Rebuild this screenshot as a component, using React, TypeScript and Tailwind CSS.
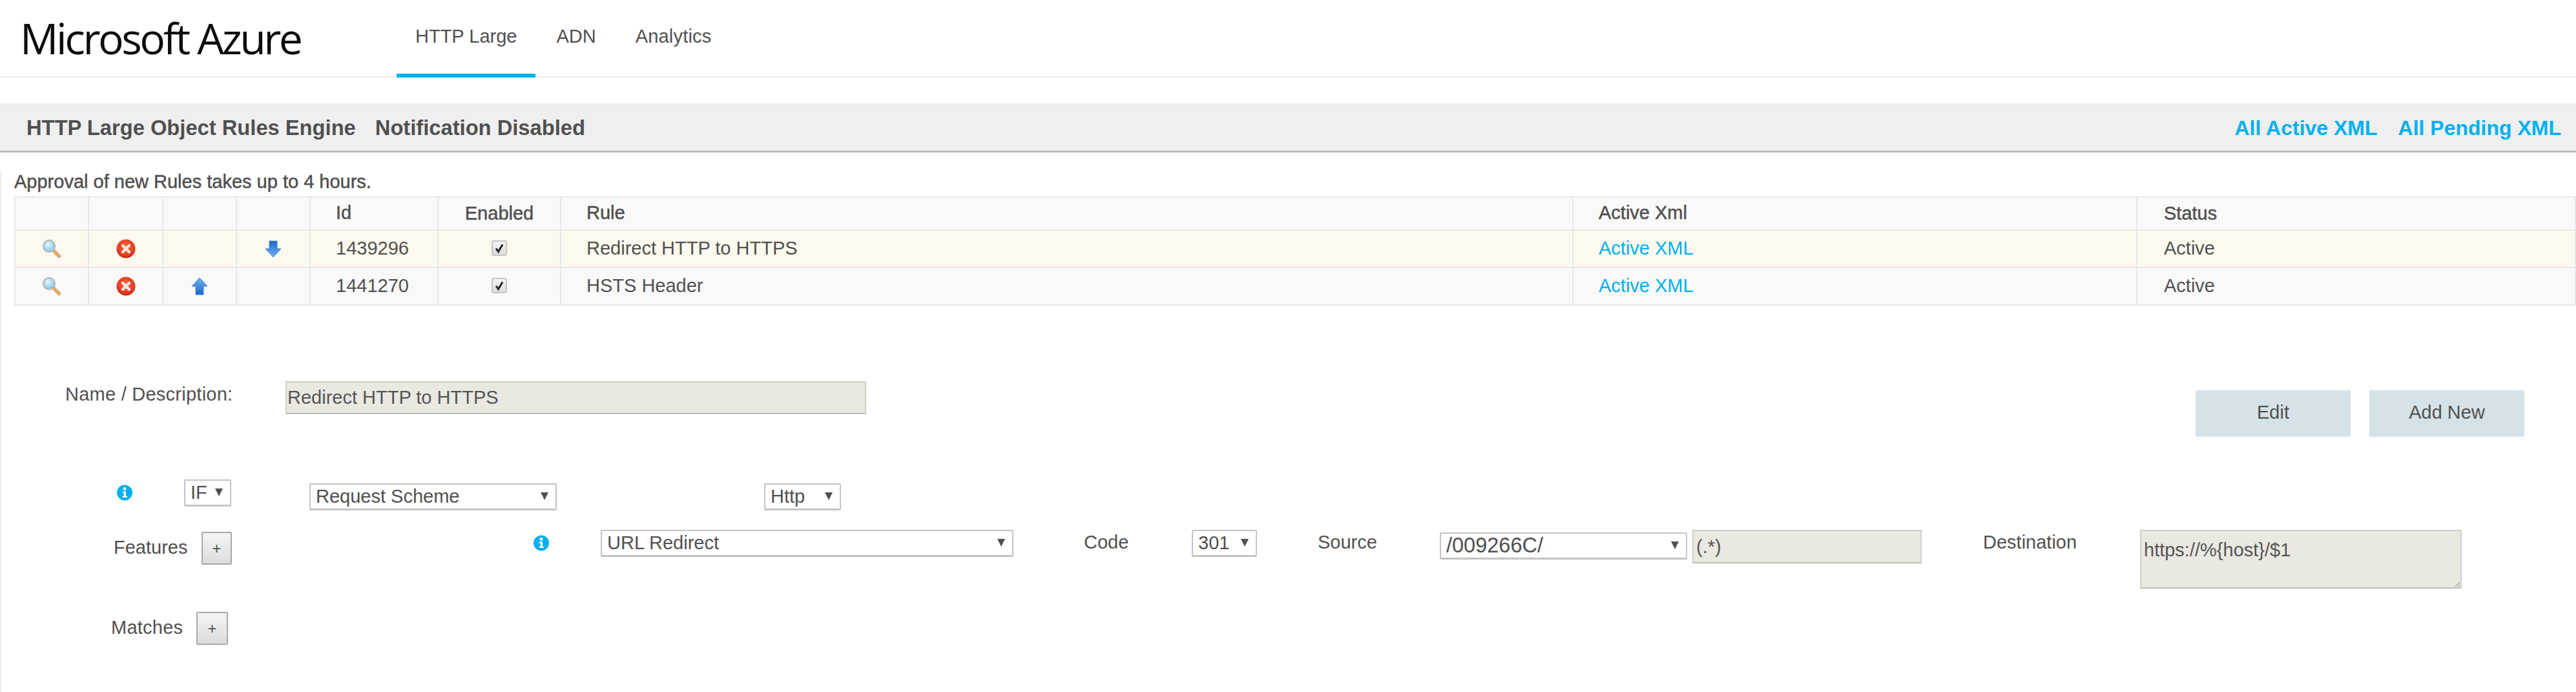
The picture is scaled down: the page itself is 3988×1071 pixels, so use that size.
const Magnifier = () => (
  <svg width="30" height="30" viewBox="0 0 30 30" className="block">
    <defs>
      <radialGradient id="glass" cx="40%" cy="35%" r="70%">
        <stop offset="0%" stopColor="#e6f6fc" />
        <stop offset="100%" stopColor="#7cc2e8" />
      </radialGradient>
    </defs>
    <line x1="17" y1="17" x2="26.5" y2="26.5" stroke="#b8b8b0" strokeWidth="6" strokeLinecap="round" />
    <line x1="18" y1="18" x2="26" y2="26" stroke="#f2a850" strokeWidth="3.6" strokeLinecap="round" />
    <circle cx="11" cy="11" r="9" fill="url(#glass)" stroke="#b4bcbe" strokeWidth="2.4" />
  </svg>
);

const RedX = () => (
  <svg width="30" height="30" viewBox="0 0 30 30" className="block">
    <defs>
      <radialGradient id="redball" cx="50%" cy="40%" r="60%">
        <stop offset="0%" stopColor="#f26a42" />
        <stop offset="75%" stopColor="#e43c1e" />
        <stop offset="100%" stopColor="#bc2412" />
      </radialGradient>
    </defs>
    <circle cx="15" cy="15" r="14.5" fill="url(#redball)" />
    <path d="M10 10 L20 20 M20 10 L10 20" stroke="#f2e6e2" strokeWidth="4.4" strokeLinecap="round" />
  </svg>
);

const ArrowDown = () => (
  <svg width="26" height="27" viewBox="0 0 26 27" className="block">
    <defs>
      <linearGradient id="blueDown" x1="0" y1="0" x2="0" y2="1">
        <stop offset="0%" stopColor="#1a68c8" />
        <stop offset="100%" stopColor="#74b4ec" />
      </linearGradient>
    </defs>
    <path d="M7 1 H19 V13 H25 L13 26 L1 13 H7 Z" fill="url(#blueDown)" stroke="#3f86d6" strokeWidth="1" strokeLinejoin="round" />
  </svg>
);

const ArrowUp = () => (
  <svg width="26" height="28" viewBox="0 0 26 28" className="block">
    <defs>
      <linearGradient id="blueUp" x1="0" y1="0" x2="0" y2="1">
        <stop offset="0%" stopColor="#74b4ec" />
        <stop offset="100%" stopColor="#1a68c8" />
      </linearGradient>
    </defs>
    <path d="M13 1 L25 14 H19 V27 H7 V14 H1 Z" fill="url(#blueUp)" stroke="#3f86d6" strokeWidth="1" strokeLinejoin="round" />
  </svg>
);

const CheckBox = () => (
  <span className="-mt-[3px] flex h-[24px] w-[24px] items-center justify-center rounded-[4px] border-2 border-[#c4c4c4] bg-gradient-to-b from-[#f4f4f4] to-[#dcdcdc]">
    <svg width="16" height="16" viewBox="0 0 16 16">
      <path d="M3 8.5 L6.5 13.5 L13 2.5" fill="none" stroke="#222" strokeWidth="3" />
    </svg>
  </span>
);

const InfoIcon = () => (
  <svg width="24" height="25" viewBox="0 0 24 25" className="block shrink-0">
    <circle cx="12" cy="12.5" r="12" fill="#00b0f0" />
    <circle cx="12" cy="6.5" r="2.4" fill="#fff" />
    <path d="M8.5 10.5 H14 V18 H16 V20 H8.5 V18 H10.5 V12.5 H8.5 Z" fill="#fff" />
  </svg>
);

const Select = ({ value, options, className, textSize = "text-[29px]" }: { value: string; options: string[]; className: string; textSize?: string }) => (
  <div className={`relative h-[42px] shrink-0 ${className}`}>
    <select
      defaultValue={value}
      className={`h-full w-full appearance-none rounded-[2px] border-2 border-b-[3px] border-[#c4c4c4] bg-white pl-[8px] text-[#505050] outline-none ${textSize}`}
    >
      {options.map((o) => (
        <option key={o}>{o}</option>
      ))}
    </select>
    <span className="absolute right-[13px] top-[14px] h-0 w-0 border-x-[6px] border-t-[12px] border-x-transparent border-t-[#505050]" />
  </div>
);

const PlusButton = ({ className }: { className: string }) => (
  <button className={`h-[51px] shrink-0 rounded-[2px] border-2 border-[#a8a8a8] bg-gradient-to-b from-[#f5f5f5] to-[#dcdcdc] text-[24px] text-[#505050] ${className}`}>
    +
  </button>
);

const rows = [
  { id: "1439296", rule: "Redirect HTTP to HTTPS", bg: "bg-[#fdf9ee]", up: false, down: true },
  { id: "1441270", rule: "HSTS Header", bg: "bg-[#f9f9f9]", up: true, down: false },
];

const cell = "border-2 border-[#e8e8e8]";
const textCell = "border-2 border-[#e8e8e8] pb-[2px] pl-[39px]";
const iconWrap = "flex items-center justify-center";

export default function App() {
  return (
    <div className="w-[3988px] h-[1071px] overflow-hidden bg-white font-['Liberation_Sans',Arial,sans-serif] text-[29px] leading-[35px] text-[#505050]">
      {/* top nav */}
      <header className="flex h-[120px] items-start border-b-2 border-[#eeeeee]">
        <div className="ml-[31px] w-[583px] pt-[15px] font-['Open_Sans',sans-serif] text-[66px] leading-[86px] tracking-[-3.4px] text-[#0c0c0c]">
          Microsoft Azure
        </div>
        <nav className="flex h-[120px]">
          <a className="h-[120px] border-b-[6px] border-[#00b0f0] px-[29px] pt-[39px]">HTTP Large</a>
          <a className="px-[32px] pt-[39px]">ADN</a>
          <a className="px-[29px] pt-[39px] tracking-[0.2px]">Analytics</a>
        </nav>
      </header>

      {/* title bar */}
      <div className="mt-[40px] flex h-[76px] items-start justify-between border-b-[3px] border-[#bbbbbb] bg-[#efefef] pl-[41px] pr-[23px] pt-[19px] font-bold leading-[38px]">
        <div className="flex gap-[30px] text-[32.7px]">
          <span>HTTP Large Object Rules Engine</span>
          <span>Notification Disabled</span>
        </div>
        <div className="flex gap-[32px] text-[32px] text-[#00b0f0]">
          <a>All Active XML</a>
          <a>All Pending XML</a>
        </div>
      </div>

      <main className="h-[834px] border-b-2 border-l-2 border-[#eeeeee]">
        <p className="ml-[20px] mt-[28px] [-webkit-text-stroke:0.5px]">Approval of new Rules takes up to 4 hours.</p>

        <table className="ml-[20px] mt-[5px] w-[3964px] table-fixed border-collapse">
          <colgroup>
            <col className="w-[114px]" />
            <col className="w-[115px]" />
            <col className="w-[114px]" />
            <col className="w-[114px]" />
            <col className="w-[198px]" />
            <col className="w-[190px]" />
            <col className="w-[1567px]" />
            <col className="w-[873px]" />
            <col className="w-[679px]" />
          </colgroup>
          <thead>
            <tr className="h-[51px] bg-[#f9f9f9] [-webkit-text-stroke:0.5px]">
              <th className={cell} />
              <th className={cell} />
              <th className={cell} />
              <th className={cell} />
              <th className={`${textCell} text-left font-normal`}>Id</th>
              <th className={`${cell} text-center font-normal`}>Enabled</th>
              <th className={`${textCell} text-left font-normal`}>Rule</th>
              <th className={`${textCell} text-left font-normal`}>Active Xml</th>
              <th className={`${cell} pl-[41px] text-left font-normal`}>Status</th>
            </tr>
          </thead>
          <tbody>
            {rows.map((r) => (
              <tr key={r.id} className={`h-[58px] ${r.bg}`}>
                <td className={cell}><div className={iconWrap}><Magnifier /></div></td>
                <td className={cell}><div className={iconWrap}><RedX /></div></td>
                <td className={cell}><div className={iconWrap}>{r.up && <ArrowUp />}</div></td>
                <td className={cell}><div className={iconWrap}>{r.down && <ArrowDown />}</div></td>
                <td className={textCell}>{r.id}</td>
                <td className={cell}><div className={iconWrap}><CheckBox /></div></td>
                <td className={textCell}>{r.rule}</td>
                <td className={`${textCell} text-[#00b0f0]`}>Active XML</td>
                <td className={`${cell} pb-[2px] pl-[41px]`}>Active</td>
              </tr>
            ))}
          </tbody>
        </table>

        {/* name row */}
        <section className="mt-[117px] flex items-start">
          <label className="ml-[99px] mt-[3px] w-[260px] shrink-0 whitespace-nowrap tracking-[0.25px]">Name / Description:</label>
          <input
            readOnly
            value="Redirect HTTP to HTTPS"
            className="ml-[81px] h-[51px] w-[899px] shrink-0 border-2 border-[#cfcfc8] border-b-[#bdbdb6] bg-[#e9e9e2] pl-[1px] text-[#555555] outline-none"
          />
          <div className="ml-auto mr-[80px] mt-[14px] flex gap-[29px]">
            <button className="h-[72px] w-[240px] bg-[#d5e2e8] pb-[3px]">Edit</button>
            <button className="h-[72px] w-[240px] bg-[#d5e2e8] pb-[3px]">Add New</button>
          </div>
        </section>

        {/* condition row */}
        <section className="mt-[66px] flex h-[48px] items-start">
          <div className="ml-[179px] mt-[8px]"><InfoIcon /></div>
          <Select value="IF" options={["IF"]} className="ml-[80px] w-[73px]" />
          <Select value="Request Scheme" options={["Request Scheme"]} className="ml-[121px] mt-[6px] w-[383px]" />
          <Select value="Http" options={["Http", "Https"]} className="ml-[321px] mt-[6px] w-[119px]" />
        </section>

        {/* feature row */}
        <section className="mt-[30px] flex h-[91px] items-start">
          <label className="ml-[174px] mt-[10px] w-[114px] shrink-0">Features</label>
          <PlusButton className="ml-[22px] mt-[3px] w-[47px]" />
          <div className="ml-[467px] mt-[8px]"><InfoIcon /></div>
          <Select value="URL Redirect" options={["URL Redirect"]} className="ml-[80px] w-[639px]" />
          <label className="ml-[109px] mt-[2px] w-[70px] shrink-0">Code</label>
          <Select value="301" options={["301", "302"]} className="ml-[97px] w-[101px]" />
          <label className="ml-[94px] mt-[2px] w-[93px] shrink-0">Source</label>
          <Select value="/009266C/" options={["/009266C/"]} className="ml-[96px] mt-[4px] w-[383px]" textSize="text-[32.5px]" />
          <input
            readOnly
            value="(.*)"
            className="ml-[8px] h-[52px] w-[355px] shrink-0 border-2 border-[#cfcfc8] border-b-[#bdbdb6] bg-[#e9e9e2] pl-[4px] text-[#555555] outline-none"
          />
          <label className="ml-[95px] mt-[2px] w-[147px] shrink-0">Destination</label>
          <textarea
            readOnly
            value="https://%{host}/$1"
            className="ml-[96px] h-[91px] w-[498px] shrink-0 border-2 border-[#cfcfc8] border-b-[#bdbdb6] bg-[#e9e9e2] pl-[4px] pt-[12px] text-[#555555] outline-none"
          />
        </section>

        {/* match row */}
        <section className="mt-[36px] flex items-start">
          <label className="ml-[170px] mt-[7px] w-[112px] shrink-0 tracking-[0.25px]">Matches</label>
          <PlusButton className="ml-[20px] w-[49px]" />
        </section>
      </main>
    </div>
  );
}
